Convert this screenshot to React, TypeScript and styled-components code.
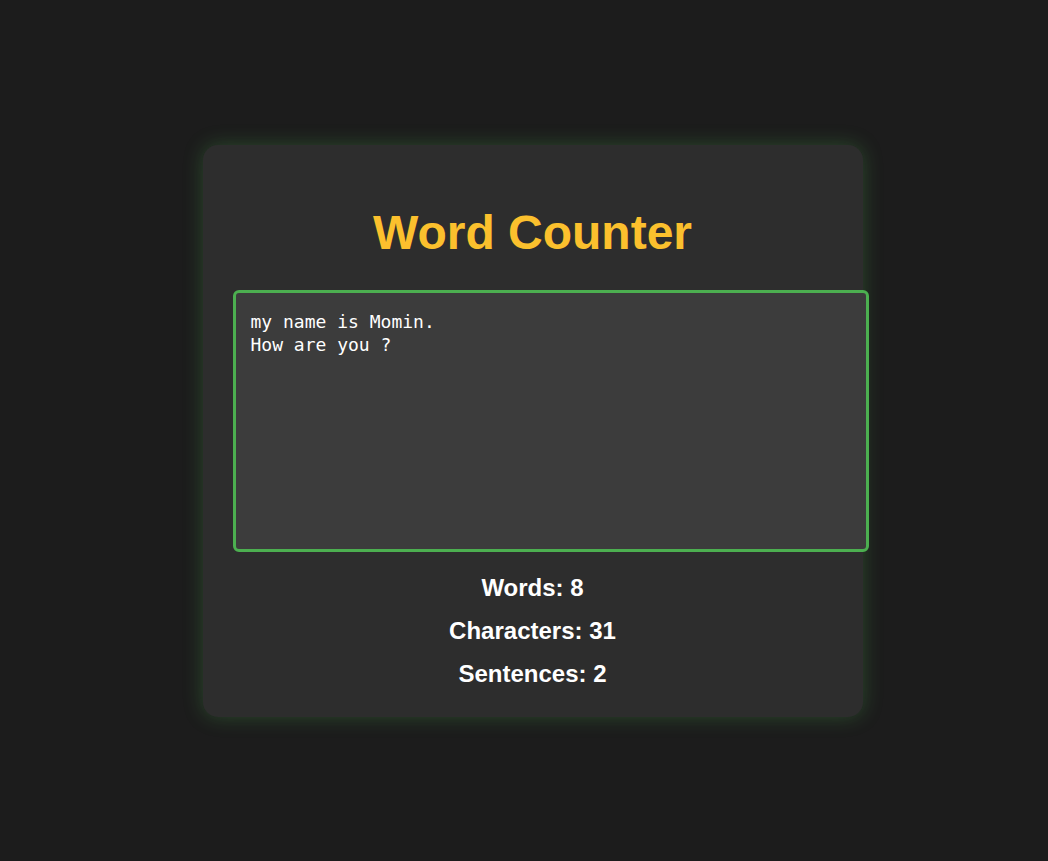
import { useEffect, useRef, useState } from "react";
import styled, { createGlobalStyle } from "styled-components";

const GlobalStyle = createGlobalStyle`
  body {
    margin: 0;
    background: #1c1c1c;
    font-family: "Liberation Sans", Arial, sans-serif;
  }
`;

const Page = styled.div`
  min-height: 100vh;
  display: flex;
  justify-content: center;
  align-items: center;
  padding-left: 17px;
`;

const Card = styled.div`
  width: 600px;
  padding: 30px 30px 29px;
  background: #2d2d2d;
  border-radius: 15px;
  box-shadow: 0 0 20px rgba(76, 175, 80, 0.3);
`;

const Title = styled.h1`
  margin: 30px 0 30px;
  text-align: center;
  font-size: 48px;
  font-weight: bold;
  line-height: 55px;
  color: #fbc02d;
`;

const TextBox = styled.textarea`
  display: block;
  width: 100%;
  height: 224px;
  padding: 17px 15px 15px;
  border: 3px solid #4caf50;
  border-radius: 6px;
  background: #3c3c3c;
  color: #ffffff;
  font-family: "DejaVu Sans Mono", monospace;
  font-size: 18px;
  line-height: 23px;
  resize: none;
  outline: none;
`;

const Stats = styled.div`
  margin-top: 22px;
  display: flex;
  flex-direction: column;
  align-items: center;
  gap: 15px;
`;

const Stat = styled.p`
  margin: 0;
  font-size: 24px;
  font-weight: bold;
  line-height: 28px;
  color: #ffffff;
`;

const App = () => {
  const [text, setText] = useState("my name is Momin.\nHow are you ?");
  const boxRef = useRef<HTMLTextAreaElement>(null);

  useEffect(() => {
    const box = boxRef.current;
    if (box) {
      box.focus();
      box.setSelectionRange(18, 18);
    }
  }, []);

  const words = text.trim() ? text.trim().split(/\s+/).length : 0;
  const sentences = text.split(/[.!?]+/).filter((s) => s.trim()).length;

  return (
    <>
      <GlobalStyle />
      <Page>
        <Card>
          <Title>Word Counter</Title>
          <TextBox ref={boxRef} value={text} onChange={(e) => setText(e.target.value)} />
          <Stats>
            <Stat>Words: {words}</Stat>
            <Stat>Characters: {text.length}</Stat>
            <Stat>Sentences: {sentences}</Stat>
          </Stats>
        </Card>
      </Page>
    </>
  );
};

export default App;
